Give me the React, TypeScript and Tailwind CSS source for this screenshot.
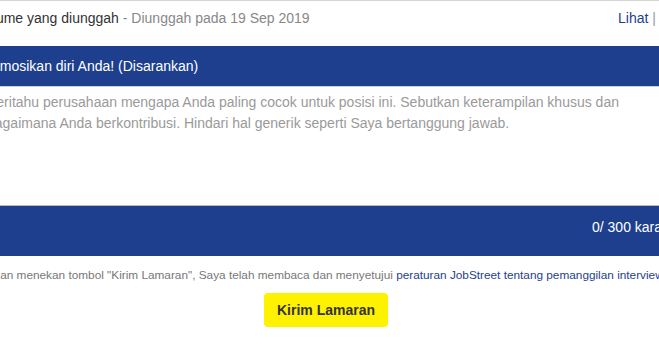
export default function App() {
  return (
    <div className="w-[659px] h-[346px] overflow-hidden bg-white font-['Liberation_Sans',Arial,sans-serif]">
      <div className="w-[900px] ml-[-26px]">
        {/* uploaded resume row */}
        <div className="border-t border-[#d4d4d4] h-[46px] flex pt-[7px] text-[14px] leading-[20px]">
          <div className="w-[647px] ml-[-3px]">
            <span className="text-[#333]">Resume yang diunggah</span>
            <span className="text-[#888]"> - Diunggah pada 19 Sep 2019</span>
          </div>
          <div className="whitespace-nowrap">
            <span className="text-[#1d3f8e]">Lihat</span>
            <span className="text-[#999]"> | </span>
            <span className="text-[#1d3f8e]">Hapus</span>
          </div>
        </div>

        {/* promote header */}
        <div className="bg-[#1d3f8e] h-[40px] flex items-center pl-[4px] text-white text-[14px]">
          Promosikan diri Anda! (Disarankan)
        </div>
        <div className="border-t border-[#d0d0d0] h-[119px] pt-[5px] pl-[13px] pr-[250px]">
          <p className="text-[14px] leading-[21px] text-[#9a9a9a]">
            Beritahu perusahaan mengapa Anda paling cocok untuk posisi ini. Sebutkan keterampilan khusus dan bagaimana Anda berkontribusi. Hindari hal generik seperti Saya bertanggung jawab.
          </p>
        </div>

        {/* counter bar */}
        <div className="border-t border-[#b8b8b8] bg-[#1d3f8e] h-[51px] pt-[11px] pl-[618px] text-white text-[14px] leading-[20px]">
          0/ 300 karakter
        </div>

        <p className="mt-[11px] ml-[-2px] text-[11.8px] leading-[16px] text-[#777] whitespace-nowrap">
          Dengan menekan tombol "Kirim Lamaran", Saya telah membaca dan menyetujui{' '}
          <span className="text-[#1d3f8e]">peraturan JobStreet tentang pemanggilan interview</span>
        </p>

        <div className="pl-[290px] mt-[10px]">
          <button className="w-[124px] h-[34px] rounded-[4px] bg-[#fff200] text-[#333] text-[14px] font-bold">
            Kirim Lamaran
          </button>
        </div>
      </div>
    </div>
  )
}
